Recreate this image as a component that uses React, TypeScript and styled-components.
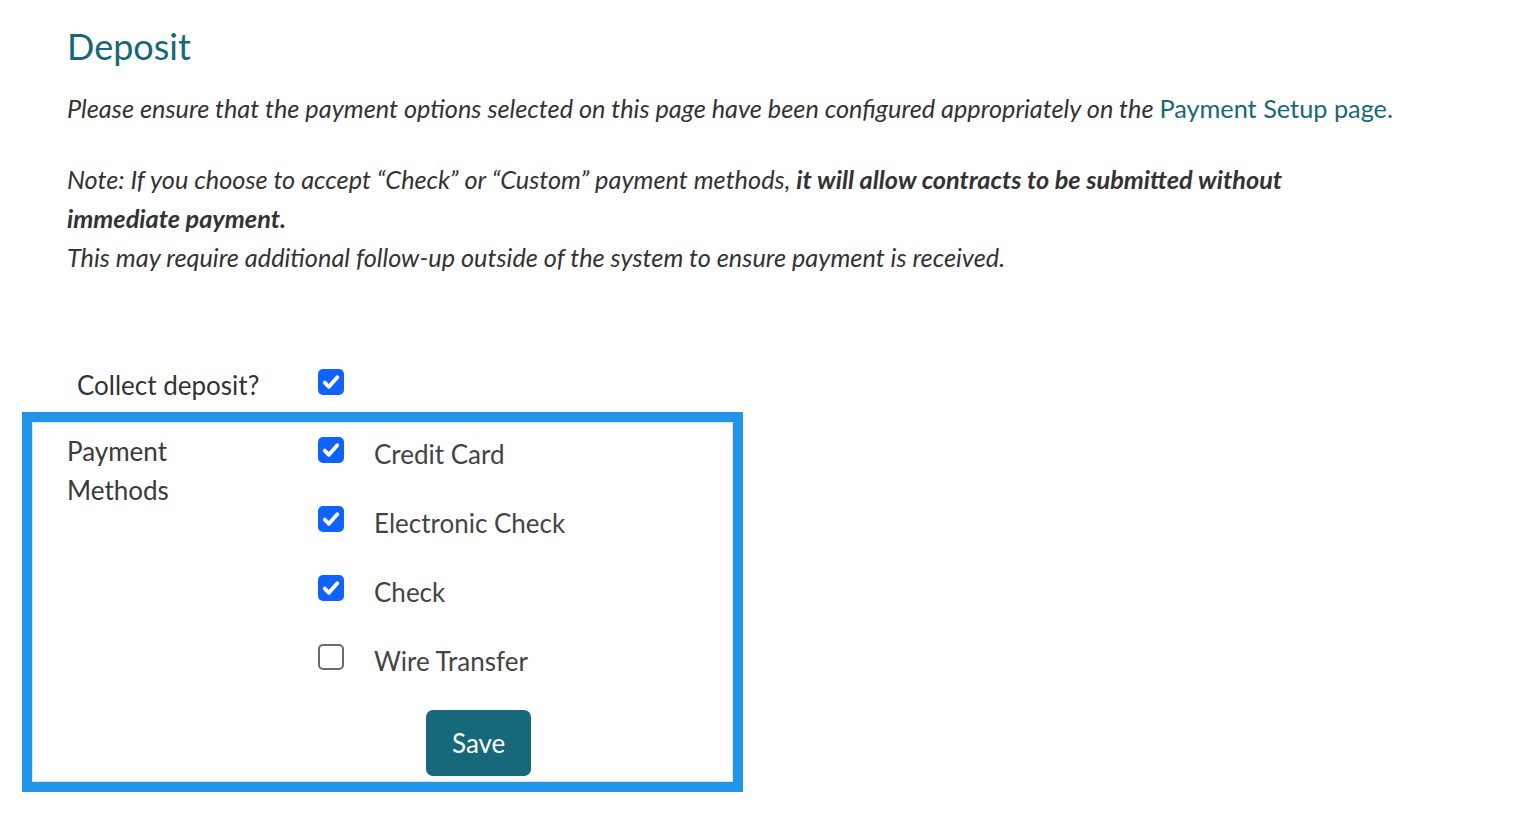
import React from "react";
import styled, { createGlobalStyle } from "styled-components";

const Global = createGlobalStyle`
  html, body { margin: 0; padding: 0; background: #ffffff; }
  body { font-family: Lato, "Open Sans", "Liberation Sans", sans-serif; color: #333333; }
  * { box-sizing: border-box; }
`;

const Page = styled.div`
  padding: 24px 22px 0 22px;
  width: 1522px;
`;

const Header = styled.div`
  padding-left: 45px;
`;

const Title = styled.h2`
  margin: 0;
  font-size: 36px;
  line-height: 44px;
  font-weight: 400;
  color: #176879;
`;

const Lead = styled.p`
  margin: 21px 0 0 0;
  font-size: 25.3px;
  line-height: 39px;
  font-style: italic;
  color: #333333;
`;

const Link = styled.a`
  color: #176879;
  font-style: normal;
  text-decoration: none;
`;

const Note = styled.p`
  margin: 32px 0 0 0;
  max-width: 1260px;
  font-size: 25.3px;
  line-height: 39px;
  font-style: italic;
  color: #333333;
  strong { font-weight: 700; }
`;

const CollectRow = styled.div`
  margin-top: 89px;
  padding-left: 55px;
  display: grid;
  grid-template-columns: 241px auto;
  align-items: start;
`;

const FieldLabel = styled.div`
  font-size: 26px;
  line-height: 39px;
  color: #333333;
`;

const CollectBox = styled.div`
  margin-top: 1px;
`;

const MethodsBox = styled.div`
  margin-top: 7px;
  width: 721px;
  border: 10px solid #2196e8;
  box-shadow: inset 0 0 0 1px #e4e4e4;
  padding: 13px 0 6px 35px;
  display: grid;
  grid-template-columns: 251px auto;
  align-items: start;
`;

const MethodsLabel = styled(FieldLabel)`
  width: 150px;
  margin-top: -3px;
  color: #3a3a3a;
`;

const OptionList = styled.div`
  display: flex;
  flex-direction: column;
  gap: 30px;
`;

const OptionRow = styled.label`
  display: flex;
  align-items: flex-start;
  gap: 30px;
  cursor: pointer;
`;

const OptionText = styled.span`
  font-size: 26px;
  line-height: 39px;
  color: #444444;
`;

const Box = styled.span<{ $checked: boolean }>`
  flex: none;
  width: 26px;
  height: 26px;
  margin-top: 2px;
  border-radius: 5px;
  display: inline-flex;
  align-items: center;
  justify-content: center;
  background: ${(p) => (p.$checked ? "#0f62fe" : "#ffffff")};
  border: ${(p) => (p.$checked ? "none" : "2px solid #6b6b6b")};
`;

const Actions = styled.div`
  margin-top: 29px;
  padding-left: 108px;
`;

const SaveButton = styled.button`
  height: 66px;
  padding: 0 26px;
  border: none;
  border-radius: 7px;
  background: #176879;
  color: #ffffff;
  font-family: Lato, "Open Sans", sans-serif;
  font-size: 26px;
  line-height: 39px;
  cursor: pointer;
`;

const Check: React.FC<{ checked: boolean }> = ({ checked }) => (
  <Box $checked={checked}>
    {checked && (
      <svg width="20" height="20" viewBox="0 0 20 20">
        <path d="M3.8 10.6 L7.9 14.8 L16.3 5.2" fill="none" stroke="#ffffff" strokeWidth="3.8" strokeLinecap="round" strokeLinejoin="round" />
      </svg>
    )}
  </Box>
);

const methods = [
  { name: "Credit Card", checked: true },
  { name: "Electronic Check", checked: true },
  { name: "Check", checked: true },
  { name: "Wire Transfer", checked: false },
];

export default function App() {
  return (
    <Page>
      <Global />
      <Header>
        <Title>Deposit</Title>
        <Lead>
          Please ensure that the payment options selected on this page have been configured appropriately on the{" "}
          <Link href="#">Payment Setup page.</Link>
        </Lead>
        <Note>
          Note: If you choose to accept “Check” or “Custom” payment methods,{" "}
          <strong>it will allow contracts to be submitted without immediate payment.</strong>
          <br />
          This may require additional follow-up outside of the system to ensure payment is received.
        </Note>
      </Header>
      <CollectRow>
        <FieldLabel>Collect deposit?</FieldLabel>
        <CollectBox>
          <Check checked={true} />
        </CollectBox>
      </CollectRow>
      <MethodsBox>
        <MethodsLabel>Payment Methods</MethodsLabel>
        <div>
          <OptionList>
            {methods.map((m) => (
              <OptionRow key={m.name}>
                <Check checked={m.checked} />
                <OptionText>{m.name}</OptionText>
              </OptionRow>
            ))}
          </OptionList>
          <Actions>
            <SaveButton>Save</SaveButton>
          </Actions>
        </div>
      </MethodsBox>
    </Page>
  );
}
